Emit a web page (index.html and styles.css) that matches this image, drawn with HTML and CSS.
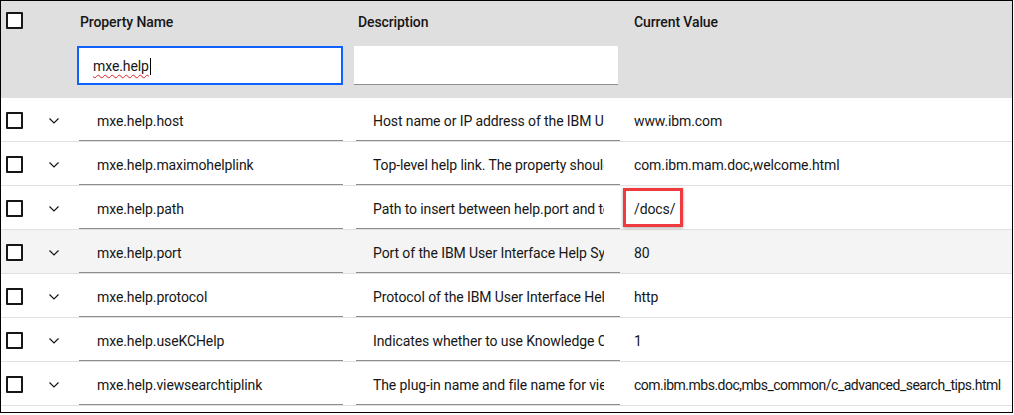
FILE: index.html
```html
<!DOCTYPE html>
<html>
<head>
<meta charset="utf-8">
<link rel="stylesheet" href="styles.css">
</head>
<body>
<div class="frame">
  <div class="table">
    <div class="head">
      <div class="hcell hcheck"><span class="cb"></span></div>
      <div class="hcell"></div>
      <div class="hcell hcol">
        <div class="htitle">Property Name</div>
        <div class="filter active"><span class="typed">mxe.help</span><span class="caret"></span></div>
      </div>
      <div class="hcell hcol hdesc">
        <div class="htitle">Description</div>
        <div class="filter"></div>
      </div>
      <div class="hcell hcol hval">
        <div class="htitle">Current Value</div>
      </div>
    </div>

    <div class="row">
      <div class="ccheck"><span class="cb"></span></div>
      <div class="cchev"><svg class="chev" viewBox="0 0 10 6" width="10" height="6"><path d="M0.5 0.5 L5 5 L9.5 0.5" /></svg></div>
      <div class="cfield prop"><span>mxe.help.host</span></div>
      <div class="cfield desc"><span>Host name or IP address of the IBM User Interface Help System</span></div>
      <div class="cval">www.ibm.com</div>
    </div>
    <div class="row">
      <div class="ccheck"><span class="cb"></span></div>
      <div class="cchev"><svg class="chev" viewBox="0 0 10 6" width="10" height="6"><path d="M0.5 0.5 L5 5 L9.5 0.5" /></svg></div>
      <div class="cfield prop"><span>mxe.help.maximohelplink</span></div>
      <div class="cfield desc"><span>Top-level help link. The property should be set to the top-level topic</span></div>
      <div class="cval">com.ibm.mam.doc,welcome.html</div>
    </div>
    <div class="row">
      <div class="ccheck"><span class="cb"></span></div>
      <div class="cchev"><svg class="chev" viewBox="0 0 10 6" width="10" height="6"><path d="M0.5 0.5 L5 5 L9.5 0.5" /></svg></div>
      <div class="cfield prop"><span>mxe.help.path</span></div>
      <div class="cfield desc"><span>Path to insert between help.port and topic</span></div>
      <div class="cval marked"><span>/docs/</span><span class="callout"></span></div>
    </div>
    <div class="row hover">
      <div class="ccheck"><span class="cb"></span></div>
      <div class="cchev"><svg class="chev" viewBox="0 0 10 6" width="10" height="6"><path d="M0.5 0.5 L5 5 L9.5 0.5" /></svg></div>
      <div class="cfield prop"><span>mxe.help.port</span></div>
      <div class="cfield desc"><span>Port of the IBM User Interface Help System</span></div>
      <div class="cval">80</div>
    </div>
    <div class="row">
      <div class="ccheck"><span class="cb"></span></div>
      <div class="cchev"><svg class="chev" viewBox="0 0 10 6" width="10" height="6"><path d="M0.5 0.5 L5 5 L9.5 0.5" /></svg></div>
      <div class="cfield prop"><span>mxe.help.protocol</span></div>
      <div class="cfield desc"><span>Protocol of the IBM User Interface Help System</span></div>
      <div class="cval">http</div>
    </div>
    <div class="row">
      <div class="ccheck"><span class="cb"></span></div>
      <div class="cchev"><svg class="chev" viewBox="0 0 10 6" width="10" height="6"><path d="M0.5 0.5 L5 5 L9.5 0.5" /></svg></div>
      <div class="cfield prop"><span>mxe.help.useKCHelp</span></div>
      <div class="cfield desc"><span>Indicates whether to use Knowledge Center help</span></div>
      <div class="cval">1</div>
    </div>
    <div class="row">
      <div class="ccheck"><span class="cb"></span></div>
      <div class="cchev"><svg class="chev" viewBox="0 0 10 6" width="10" height="6"><path d="M0.5 0.5 L5 5 L9.5 0.5" /></svg></div>
      <div class="cfield prop"><span>mxe.help.viewsearchtiplink</span></div>
      <div class="cfield desc"><span>The plug-in name and file name for viewing search tips</span></div>
      <div class="cval long">com.ibm.mbs.doc,mbs_common/c_advanced_search_tips.html</div>
    </div>
  </div>
</div>
</body>
</html>
```

FILE: styles.css
```css
* { box-sizing: border-box; }
html, body { margin: 0; padding: 0; background: #fff; }
body {
  font-family: Roboto, "Liberation Sans", sans-serif;
  font-size: 14px;
  letter-spacing: -0.1px;
  color: #161616;
}
.frame {
  width: 1013px;
  height: 413px;
  border: 1px solid #000;
  background: #fff;
  overflow: hidden;
}
.head, .row {
  display: grid;
  grid-template-columns: 40px 36px 277px 277px 1fr;
}
.head {
  height: 97px;
  background: #dfdfdf;
}
.hcheck { padding: 11px 0 0 5px; }
.hcol { padding-top: 13px; }
.htitle {
  font-weight: 500;
  line-height: 16px;
  height: 16px;
  padding-left: 3px;
  color: #161616;
}
.hdesc .htitle { padding-left: 4px; }
.hval .htitle { padding-left: 3px; }
.filter {
  margin-top: 16px;
  width: 264px;
  height: 39px;
  background: #fff;
  border-bottom: 1px solid #8d8d8d;
  display: flex;
  align-items: center;
  padding-left: 15px;
}
.filter.active {
  width: 266px;
  border: 2px solid #0f62fe;
  height: 39px;
  padding-left: 14px;
  padding-top: 1px;
}
.typed {
  text-decoration: underline wavy #e02020;
  text-decoration-thickness: 1px;
  text-underline-offset: 3px;
  text-decoration-skip-ink: none;
}
.caret {
  display: inline-block;
  width: 1px;
  height: 17px;
  background: #000;
  margin-left: 1px;
}
.cb {
  display: block;
  width: 17px;
  height: 17px;
  border: 2px solid #161616;
  border-radius: 1px;
  background: #fff;
}
.row {
  height: 44px;
  border-bottom: 1px solid #e0e0e0;
}
.row.hover { background: #f4f4f4; }
.ccheck {
  display: flex;
  align-items: center;
  padding-left: 5px;
  padding-top: 2px;
}
.cchev {
  display: flex;
  align-items: center;
  padding-left: 8px;
  padding-top: 3px;
}
.chev path {
  fill: none;
  stroke: #161616;
  stroke-width: 1.2;
}
.cfield {
  width: 264px;
  height: 43px;
  margin-left: 2px;
  border-bottom: 1px solid #8d8d8d;
  display: flex;
  align-items: center;
  padding: 3px 16px 0 18px;
  overflow: hidden;
  white-space: nowrap;
}
.cfield.desc { padding-left: 17px; }
.cfield span {
  overflow: hidden;
  display: block;
  min-width: 0;
  flex: 1 1 auto;
}
.cval {
  display: flex;
  align-items: center;
  padding: 3px 0 0 3px;
  white-space: nowrap;
  position: relative;
}
.cval.long { letter-spacing: -0.5px; }
.callout {
  position: absolute;
  left: -8px;
  top: 2px;
  width: 60px;
  height: 39px;
  border: 3px solid #ef3b40;
  box-shadow: 0 1px 3px rgba(0,0,0,0.35);
}
```
